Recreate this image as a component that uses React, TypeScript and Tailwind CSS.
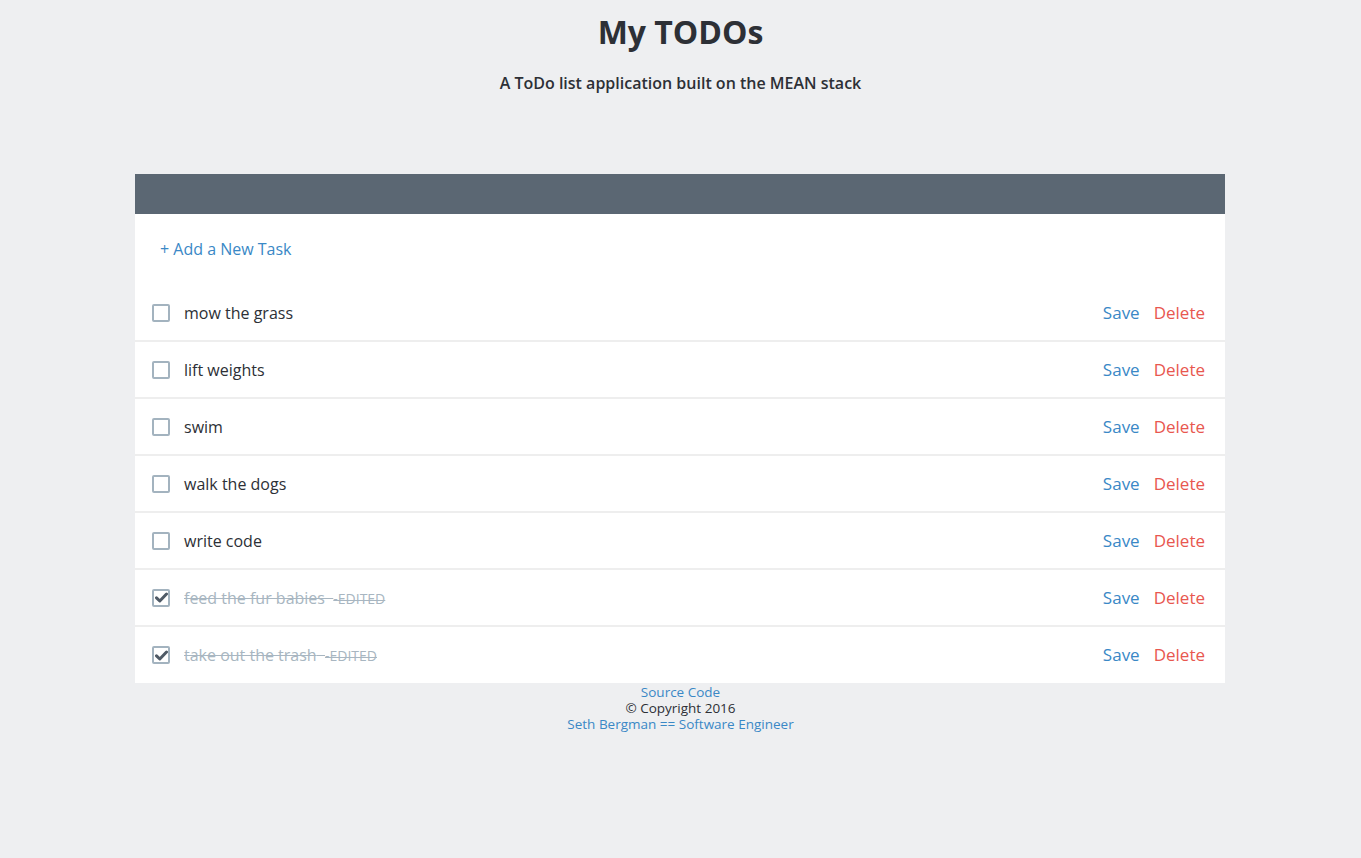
import React from "react";

const tasks = [
  { text: "mow the grass", done: false },
  { text: "lift weights", done: false },
  { text: "swim", done: false },
  { text: "walk the dogs", done: false },
  { text: "write code", done: false },
  { text: "feed the fur babies", done: true },
  { text: "take out the trash", done: true },
];

function Check({ checked }: { checked: boolean }) {
  return (
    <span className="w-[18px] h-[18px] border-2 border-[#a3b3bf] rounded-[2px] flex items-center justify-center bg-white shrink-0">
      {checked && (
        <svg width="13" height="11" viewBox="0 0 13 11">
          <path d="M1.5 5.8 L4.8 9 L11.5 2" fill="none" stroke="#4f5a66" strokeWidth="3" strokeLinecap="round" strokeLinejoin="round" />
        </svg>
      )}
    </span>
  );
}

export default function App() {
  return (
    <div className="min-h-[858px] bg-[#eeeff1] text-[#2d3036]" style={{ fontFamily: '"Open Sans", "Noto Sans", sans-serif' }}>
      <div className="pt-[10px] text-center">
        <h1 className="text-[32px] leading-[44px] font-bold">My TODOs</h1>
        <p className="mt-[19px] text-[16px] leading-[20px] font-semibold">A ToDo list application built on the MEAN stack</p>
      </div>
      <div className="ml-[135px] w-[1090px] mt-[81px]">
        <div className="h-[40px] bg-[#5b6773]" />
        <div className="bg-white">
          <div className="h-[71px] flex items-center pl-[25px] pb-[1px]">
            <span className="text-[16px] text-[#3a88c6]">+ Add a New Task</span>
          </div>
          {tasks.map((t, i) => (
            <div key={i} className={`flex items-center pl-[17px] pr-[20px] ${i < tasks.length - 1 ? "h-[57px] border-b-2 border-[#eeeeee]" : "h-[56px]"}`}>
              <Check checked={t.done} />
              <div className="ml-[14px] flex-1 text-[16px]">
                {t.done ? (
                  <span className="line-through text-[#a8b6c1]">
                    {t.text}{"\u00a0\u00a0"}<span className="text-[14px] uppercase">-edited</span>
                  </span>
                ) : (
                  <span>{t.text}</span>
                )}
              </div>
              <span className="text-[17px] text-[#3a88c6]">Save</span>
              <span className="ml-[14px] text-[17px] text-[#e8574f]">Delete</span>
            </div>
          ))}
        </div>
      </div>
      <div className="pt-[1px] text-center text-[13.5px] leading-[16px]">
        <div className="text-[#3a88c6]">Source Code</div>
        <div>© Copyright 2016</div>
        <div className="text-[#3a88c6]">Seth Bergman == Software Engineer</div>
      </div>
    </div>
  );
}
